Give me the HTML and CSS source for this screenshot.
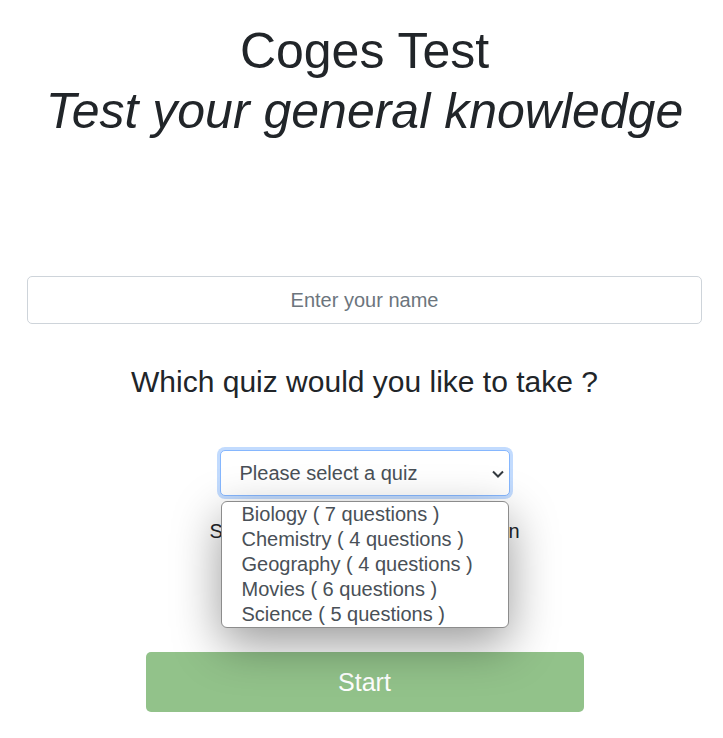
FILE: index.html
```html
<!DOCTYPE html>
<html lang="en">
<head>
<meta charset="utf-8">
<title>Coges Test</title>
<link rel="stylesheet" href="styles.css">
</head>
<body>
<main class="page">
  <h1 class="title">Coges Test<span class="subtitle">Test your general knowledge</span></h1>
  <input class="name-input" type="text" placeholder="Enter your name">
  <h2 class="question">Which quiz would you like to take ?</h2>
  <div class="select-wrap">
    <select class="quiz-select">
      <option>Please select a quiz</option>
    </select>
    <svg class="chevron" width="12" height="8" viewBox="0 0 12 8" aria-hidden="true"><path d="M1 1.5 6 6.5 11 1.5" fill="none" stroke="#343a40" stroke-width="2"/></svg>
    <ul class="popup">
      <li>Biology ( 7 questions )</li>
      <li>Chemistry ( 4 questions )</li>
      <li>Geography ( 4 questions )</li>
      <li>Movies ( 6 questions )</li>
      <li>Science ( 5 questions )</li>
    </ul>
  </div>
  <p class="hint">Select a quiz to see the description</p>
  <button class="start-btn" type="button">Start</button>
</main>
</body>
</html>
```

FILE: styles.css
```css
html, body {
  margin: 0;
  padding: 0;
  background: #ffffff;
}

body {
  font-family: "Liberation Sans", Arial, sans-serif;
  color: #212529;
}

.page {
  width: 675px;
  margin-left: 27px;
  padding-top: 21px;
  display: flex;
  flex-direction: column;
  align-items: center;
}

.title {
  margin: 0;
  font-size: 50px;
  line-height: 60px;
  font-weight: 400;
  text-align: center;
  color: #212529;
}

.subtitle {
  display: block;
  font-style: italic;
}

.name-input {
  box-sizing: border-box;
  width: 675px;
  height: 48px;
  margin-top: 135px;
  padding: 8px 16px;
  border: 1px solid #ced4da;
  border-radius: 5px;
  font-family: "Liberation Sans", Arial, sans-serif;
  font-size: 20px;
  line-height: 30px;
  text-align: center;
  color: #495057;
  outline: none;
}

.name-input::placeholder {
  color: #6c757d;
}

.question {
  margin: 40px 0 0;
  font-size: 30px;
  line-height: 36px;
  font-weight: 400;
  text-align: center;
}

.select-wrap {
  position: relative;
  width: 290px;
  margin-top: 50px;
}

.quiz-select {
  box-sizing: border-box;
  display: block;
  width: 290px;
  height: 46px;
  padding: 7px 30px 7px 19px;
  border: 1px solid #86b7fe;
  border-radius: 5px;
  box-shadow: 0 0 0 3px rgba(13, 110, 253, 0.25);
  background: #ffffff;
  font-family: "Liberation Sans", Arial, sans-serif;
  font-size: 20px;
  line-height: 30px;
  color: #495057;
  -webkit-appearance: none;
  appearance: none;
  outline: none;
}

.chevron {
  position: absolute;
  top: 20px;
  right: 6px;
  pointer-events: none;
}

.popup {
  position: absolute;
  top: 51px;
  left: 1px;
  z-index: 10;
  box-sizing: border-box;
  width: 288px;
  margin: 0;
  padding: 0;
  list-style: none;
  background: #ffffff;
  border: 1px solid #8c8c8c;
  border-radius: 6px;
  box-shadow: 0 16px 48px rgba(0, 0, 0, 0.4);
}

.popup li {
  height: 25px;
  padding-left: 20px;
  font-size: 20px;
  line-height: 24px;
  color: #495057;
  white-space: nowrap;
}

.hint {
  margin: 20px 0 0;
  font-size: 20px;
  line-height: 30px;
  text-align: center;
  color: #212529;
}

.start-btn {
  width: 438px;
  height: 60px;
  margin-top: 106px;
  border: none;
  border-radius: 5px;
  background: #92c28a;
  color: #ffffff;
  font-family: "Liberation Sans", Arial, sans-serif;
  font-size: 25px;
  line-height: 30px;
}
```
